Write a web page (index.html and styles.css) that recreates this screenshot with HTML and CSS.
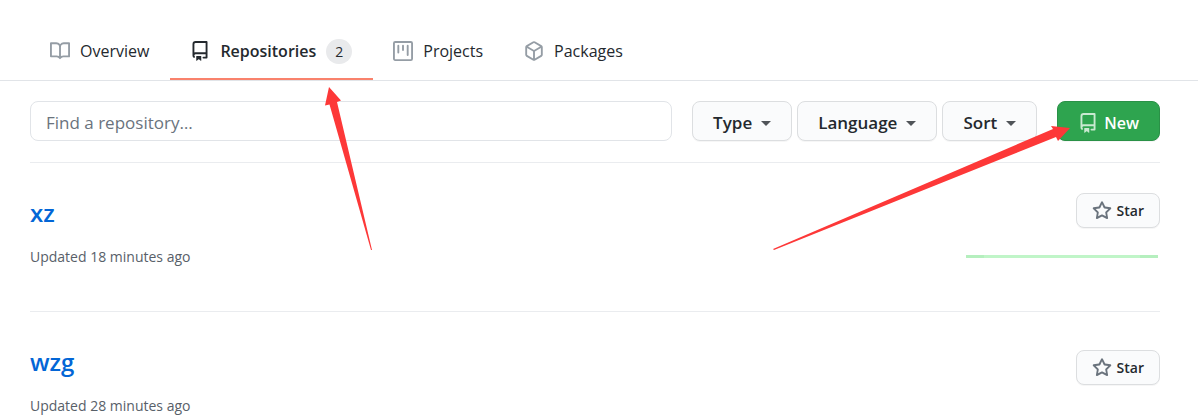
FILE: index.html
```html
<!DOCTYPE html>
<html lang="en">
<head>
    <meta charset="UTF-8">
    <meta name="viewport" content="width=device-width, initial-scale=1.0">
    <title>Repositories</title>
    <link rel="stylesheet" href="styles.css">
</head>
<body>
    <!-- Shared icons -->
    <svg class="icon-defs" aria-hidden="true">
        <symbol id="icon-repo" viewBox="0 0 16 16">
            <path fill-rule="evenodd" d="M2 2.5A2.5 2.5 0 014.5 0h8.75a.75.75 0 01.75.75v12.5a.75.75 0 01-.75.75h-2.5a.75.75 0 110-1.5h1.75v-2h-8a1 1 0 00-.714 1.7.75.75 0 01-1.072 1.05A2.495 2.495 0 012 11.5v-9zm10.5-1V9h-8c-.356 0-.694.074-1 .208V2.5a1 1 0 011-1h8zM5 12.25v3.25a.25.25 0 00.4.2l1.45-1.087a.25.25 0 01.3 0L8.6 15.7a.25.25 0 00.4-.2v-3.25a.25.25 0 00-.25-.25h-3.5a.25.25 0 00-.25.25z"/>
        </symbol>
        <symbol id="icon-star" viewBox="0 0 16 16">
            <path fill-rule="evenodd" d="M8 .25a.75.75 0 01.673.418l1.882 3.815 4.21.612a.75.75 0 01.416 1.279l-3.046 2.97.719 4.192a.75.75 0 01-1.088.791L8 12.347l-3.766 1.98a.75.75 0 01-1.088-.79l.72-4.194L.818 6.374a.75.75 0 01.416-1.28l4.21-.611L7.327.668A.75.75 0 018 .25zm0 2.445L6.615 5.5a.75.75 0 01-.564.41l-3.097.45 2.24 2.184a.75.75 0 01.216.664l-.528 3.084 2.769-1.456a.75.75 0 01.698 0l2.77 1.456-.53-3.084a.75.75 0 01.216-.664l2.24-2.183-3.096-.45a.75.75 0 01-.564-.41L8 2.694v.001z"/>
        </symbol>
    </svg>

    <nav class="tabs">
        <a class="tab" href="#overview">
            <svg class="icon" viewBox="0 0 16 16"><path fill-rule="evenodd" d="M0 1.75A.75.75 0 01.75 1h4.253c1.227 0 2.317.59 3 1.501A3.744 3.744 0 0111.006 1h4.245a.75.75 0 01.75.75v10.5a.75.75 0 01-.75.75h-4.507a2.25 2.25 0 00-1.591.659l-.622.621a.75.75 0 01-1.06 0l-.622-.621A2.25 2.25 0 005.258 13H.75a.75.75 0 01-.75-.75V1.75zm8.755 3a2.25 2.25 0 012.25-2.25H14.5v9h-3.757c-.71 0-1.4.201-1.992.572l.004-7.322zm-1.504 7.324l.004-5.073-.002-2.253A2.25 2.25 0 005.003 2.5H1.5v9h3.757a3.75 3.75 0 011.994.574z"/></svg>
            <span>Overview</span>
        </a>
        <a class="tab selected" href="#repositories">
            <svg class="icon"><use href="#icon-repo"/></svg>
            <span>Repositories</span>
            <span class="counter">2</span>
        </a>
        <a class="tab" href="#projects">
            <svg class="icon" viewBox="0 0 16 16"><path fill-rule="evenodd" d="M1.75 0A1.75 1.75 0 000 1.75v12.5C0 15.216.784 16 1.75 16h12.5A1.75 1.75 0 0016 14.25V1.75A1.75 1.75 0 0014.25 0H1.75zM1.5 1.75a.25.25 0 01.25-.25h12.5a.25.25 0 01.25.25v12.5a.25.25 0 01-.25.25H1.75a.25.25 0 01-.25-.25V1.75zM11.75 3a.75.75 0 00-.75.75v7.5a.75.75 0 001.5 0v-7.5a.75.75 0 00-.75-.75zm-8.25.75a.75.75 0 011.5 0v5.5a.75.75 0 01-1.5 0v-5.5zM8 3a.75.75 0 00-.75.75v3.5a.75.75 0 001.5 0v-3.5A.75.75 0 008 3z"/></svg>
            <span>Projects</span>
        </a>
        <a class="tab" href="#packages">
            <svg class="icon" viewBox="0 0 16 16"><path fill-rule="evenodd" d="M8.878.392a1.75 1.75 0 00-1.756 0l-5.25 3.045A1.75 1.75 0 001 4.951v6.098c0 .624.332 1.2.872 1.514l5.25 3.045a1.75 1.75 0 001.756 0l5.25-3.045c.54-.313.872-.89.872-1.514V4.951c0-.624-.332-1.2-.872-1.514L8.878.392zM7.875 1.69a.25.25 0 01.25 0l4.63 2.685L8 7.133 3.245 4.375l4.63-2.685zM2.5 5.677v5.372c0 .09.047.171.125.216l4.625 2.683V8.432L2.5 5.677zm6.25 8.271l4.625-2.683a.25.25 0 00.125-.216V5.677L8.75 8.432v5.516z"/></svg>
            <span>Packages</span>
        </a>
    </nav>

    <main>
        <form class="filters">
            <input type="search" class="search" placeholder="Find a repository…" aria-label="Find a repository">
            <div class="menus">
                <button type="button" class="btn">Type <span class="caret"></span></button>
                <button type="button" class="btn">Language <span class="caret"></span></button>
                <button type="button" class="btn">Sort <span class="caret"></span></button>
            </div>
            <button type="button" class="btn btn-new"><svg class="icon"><use href="#icon-repo"/></svg>New</button>
        </form>

        <ul class="repo-list">
            <li class="repo">
                <div>
                    <h3><a href="#xz">xz</a></h3>
                    <p class="updated">Updated 18 minutes ago</p>
                </div>
                <div class="repo-side">
                    <button type="button" class="btn btn-star"><svg class="icon"><use href="#icon-star"/></svg>Star</button>
                    <div class="activity"></div>
                </div>
            </li>
            <li class="repo">
                <div>
                    <h3><a href="#wzg">wzg</a></h3>
                    <p class="updated">Updated 28 minutes ago</p>
                </div>
                <div class="repo-side no-activity">
                    <button type="button" class="btn btn-star"><svg class="icon"><use href="#icon-star"/></svg>Star</button>
                </div>
            </li>
        </ul>
    </main>

    <!-- Arrows over the page -->
    <svg class="arrow arrow-tab" width="49" height="165" viewBox="0 0 49 165" aria-hidden="true">
        <path d="M5 1L17 14.500L13 16L48 164L47 164L5.500 18.500L1 19.500z"/>
    </svg>
    <svg class="arrow arrow-new" width="298" height="126" viewBox="0 0 298 126" aria-hidden="true">
        <path d="M297 3L278 1L280 4L0 124L1 125L283 12L285 16z"/>
    </svg>
</body>
</html>
```

FILE: styles.css
```css
* {
    box-sizing: border-box;
}
body {
    position: relative;
    margin: 0;
    background: #fff;
    color: #24292e;
    font-family: "Segoe UI", "Open Sans", "Noto Sans", sans-serif;
    font-size: 16px;
    line-height: 24px;
}
a {
    color: #0366d6;
    text-decoration: none;
}
.icon-defs {
    position: absolute;
    width: 0;
    height: 0;
}
.icon {
    width: 20px;
    height: 20px;
    flex: none;
    fill: currentColor;
}

/* Tabs */
.tabs {
    display: flex;
    padding: 20px 30px 0;
    border-bottom: 1px solid #e1e4e8;
}
.tab {
    display: flex;
    align-items: center;
    gap: 10px;
    height: 60px;
    padding: 4px 21px 0 20px;
    border-bottom: 2px solid transparent;
    color: #24292e;
}
.tab .icon {
    color: #959da5;
}
.tab.selected {
    border-bottom-color: #f9826c;
    font-weight: 600;
}
.tab.selected .icon {
    color: #24292e;
}
.counter {
    min-width: 26px;
    border-radius: 13px;
    background: #e9eaec;
    font-size: 14px;
    font-weight: 400;
    line-height: 25px;
    text-align: center;
}

/* Search and filter buttons */
main {
    padding: 20px 38px 0 30px;
}
.filters {
    display: flex;
    gap: 20px;
    padding-bottom: 21px;
    border-bottom: 1px solid #eaecef;
}
.search {
    flex: 1;
    min-width: 0;
    height: 40px;
    padding: 3px 15px 0;
    border: 1px solid #e1e4e8;
    border-radius: 8px;
    background: #fff;
    color: #24292e;
    font: inherit;
    font-size: 17px;
}
.search::placeholder {
    color: #6a737d;
    opacity: 1;
}
.menus {
    display: flex;
    gap: 5px;
}
.btn {
    display: flex;
    align-items: center;
    height: 40px;
    padding: 3px 20px 0;
    border: 1px solid #dcdee0;
    border-radius: 8px;
    background: #fafbfc;
    box-shadow: 0 1px 0 rgba(27, 31, 35, 0.04);
    color: #24292e;
    font: inherit;
    font-size: 17px;
    font-weight: 600;
    cursor: pointer;
}
.caret {
    margin: 2px 0 0 9px;
    border: 5px solid transparent;
    border-top-color: #505459;
    border-bottom: 0;
}
.btn-new {
    gap: 6px;
    border-color: #2a9147;
    background: #2ea44f;
    color: #fff;
    font-size: 16px;
}
.btn-new .icon {
    color: #c9e9d1;
}

/* Repositories */
.repo-list {
    margin: 0;
    padding: 0;
    list-style: none;
}
.repo {
    display: flex;
    justify-content: space-between;
    padding: 30px 0;
    border-bottom: 1px solid #eaecef;
}
.repo:last-child {
    padding-bottom: 0;
    border-bottom: 0;
}
.repo h3 {
    margin: 4px 0 18px;
    font-size: 24px;
    font-weight: 600;
    line-height: 32px;
}
.updated {
    margin: 0;
    color: #586069;
    font-size: 14px;
    line-height: 20px;
}
.repo-side {
    display: flex;
    flex-direction: column;
    align-items: flex-end;
}
.no-activity {
    padding-top: 8px;
}
.btn-star {
    gap: 5px;
    height: 35px;
    padding: 0 15px;
    font-size: 14px;
}
.btn-star .icon {
    color: #6a737d;
}
.activity {
    width: 192px;
    height: 3px;
    margin: 27px 2px 23px 0;
    border: solid #b5efbe;
    border-width: 0 18px;
    background: #c0f5c8;
}

/* Arrows */
.arrow {
    position: absolute;
    fill: #fd3838;
    pointer-events: none;
}
.arrow-tab {
    top: 86px;
    left: 324px;
}
.arrow-new {
    top: 125px;
    right: 127px;
}
```
